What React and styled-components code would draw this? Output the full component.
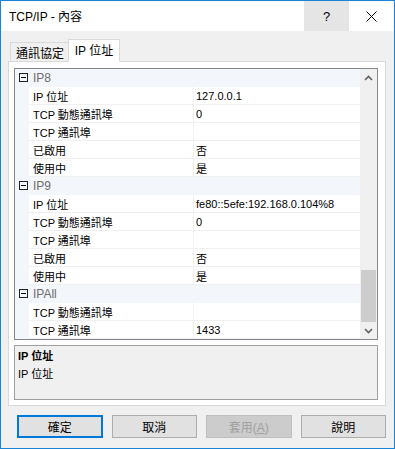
import styled, { createGlobalStyle } from "styled-components";

const GlobalStyle = createGlobalStyle`
  html, body {
    margin: 0;
    padding: 0;
    background: #f0f0f0;
  }
  * {
    box-sizing: border-box;
  }
`;

const groups = [
  {
    name: "IP8",
    rows: [
      ["IP 位址", "127.0.0.1"],
      ["TCP 動態通訊埠", "0"],
      ["TCP 通訊埠", ""],
      ["已啟用", "否"],
      ["使用中", "是"],
    ],
  },
  {
    name: "IP9",
    rows: [
      ["IP 位址", "fe80::5efe:192.168.0.104%8"],
      ["TCP 動態通訊埠", "0"],
      ["TCP 通訊埠", ""],
      ["已啟用", "否"],
      ["使用中", "是"],
    ],
  },
  {
    name: "IPAll",
    rows: [
      ["TCP 動態通訊埠", ""],
      ["TCP 通訊埠", "1433"],
    ],
  },
];

function Chevron({ down }) {
  return (
    <svg width="9" height="6" viewBox="0 0 9 6">
      <path
        d={down ? "M1 1 L4.5 4.5 L8 1" : "M1 5 L4.5 1.5 L8 5"}
        fill="none"
        stroke="#606060"
        strokeWidth="1.6"
      />
    </svg>
  );
}

function App() {
  return (
    <>
      <GlobalStyle />
      <Window>
        <TitleBar>
          <Title>TCP/IP - 內容</Title>
          <CaptionButton $shade>?</CaptionButton>
          <CaptionButton>
            <svg width="11" height="11" viewBox="0 0 11 11">
              <path d="M0.5 0.5 L10.5 10.5 M10.5 0.5 L0.5 10.5" stroke="#000" strokeWidth="1" />
            </svg>
          </CaptionButton>
        </TitleBar>
        <Body>
          <Tabs>
            <Tab>通訊協定</Tab>
            <Tab $active>IP 位址</Tab>
          </Tabs>
          <Panel>
            <Grid>
              <Rows>
                {groups.map((g) => (
                  <div key={g.name}>
                    <CategoryRow>
                      <Gutter>
                        <MinusBox />
                      </Gutter>
                      <CategoryName>{g.name}</CategoryName>
                    </CategoryRow>
                    {g.rows.map(([label, value]) => (
                      <PropRow key={label}>
                        <Gutter />
                        <Label>{label}</Label>
                        <Value>{value}</Value>
                      </PropRow>
                    ))}
                  </div>
                ))}
              </Rows>
              <ScrollBar>
                <ArrowBox>
                  <Chevron />
                </ArrowBox>
                <Track>
                  <Thumb />
                </Track>
                <ArrowBox>
                  <Chevron down />
                </ArrowBox>
              </ScrollBar>
            </Grid>
            <Description>
              <DescTitle>IP 位址</DescTitle>
              <DescText>IP 位址</DescText>
            </Description>
          </Panel>
          <ButtonRow>
            <Button $default>確定</Button>
            <Button>取消</Button>
            <Button disabled>
              套用(<u>A</u>)
            </Button>
            <Button>說明</Button>
          </ButtonRow>
        </Body>
      </Window>
    </>
  );
}

export default App;

const font = `"Liberation Sans", "Noto Sans CJK TC", sans-serif`;

const Window = styled.div`
  width: 395px;
  height: 449px;
  border: 1px solid #1883d7;
  background: #f0f0f0;
  display: flex;
  flex-direction: column;
  font-family: ${font};
  color: #000;
`;

const TitleBar = styled.div`
  height: 30px;
  background: #fff;
  display: flex;
  align-items: stretch;
`;

const Title = styled.div`
  flex: 1;
  display: flex;
  align-items: center;
  padding-left: 8px;
  font-size: 12px;
  padding-bottom: 2px;
`;

const CaptionButton = styled.div`
  width: 45px;
  display: flex;
  align-items: center;
  justify-content: center;
  font-size: 13px;
  background: ${(p) => (p.$shade ? "#e5e5e5" : "transparent")};
`;

const Body = styled.div`
  flex: 1;
  display: flex;
  flex-direction: column;
  padding: 8px 8px 0 7px;
`;

const Tabs = styled.div`
  display: flex;
  align-items: flex-end;
  padding-left: 2px;
  height: 23px;
  position: relative;
  z-index: 1;
  margin-bottom: -1px;
`;

const Tab = styled.div`
  font-size: 12px;
  display: flex;
  align-items: center;
  justify-content: center;
  border: 1px solid #d9d9d9;
  height: ${(p) => (p.$active ? "23px" : "20px")};
  width: ${(p) => (p.$active ? "52px" : "60px")};
  margin-left: ${(p) => (p.$active ? "-2px" : "0")};
  background: ${(p) => (p.$active ? "#fff" : "#f0f0f0")};
  border-bottom: ${(p) => (p.$active ? "1px solid #fff" : "1px solid #d9d9d9")};
  padding-bottom: ${(p) => (p.$active ? "2px" : "0")};
  position: relative;
  z-index: ${(p) => (p.$active ? 2 : 1)};
`;

const Panel = styled.div`
  width: 378px;
  height: 345px;
  background: #fff;
  border: 1px solid #d9d9d9;
  padding: 6px 7px 4px 5px;
  display: flex;
  flex-direction: column;
`;

const Grid = styled.div`
  height: 272px;
  border: 1px solid #828790;
  display: flex;
  background: #fff;
`;

const Rows = styled.div`
  flex: 1;
  overflow: hidden;
  font-size: 11px;
`;

const rowBase = `
  height: 18px;
  display: flex;
  align-items: stretch;
`;

const CategoryRow = styled.div`
  ${rowBase}
  background: #f3f6fb;
`;

const PropRow = styled.div`
  ${rowBase}
`;

const Gutter = styled.div`
  width: 14px;
  flex: none;
  background: #f3f6fb;
  display: flex;
  align-items: center;
  justify-content: center;
`;

const MinusBox = styled.div`
  width: 9px;
  height: 9px;
  border: 1px solid #222;
  margin: 0 0 2px 3px;
  position: relative;
  &::after {
    content: "";
    position: absolute;
    left: 1px;
    right: 1px;
    top: 3px;
    height: 1px;
    background: #000;
  }
`;

const CategoryName = styled.div`
  padding-left: 4px;
  display: flex;
  align-items: center;
  color: #6d6d6d;
  font-size: 12px;
`;

const Cell = styled.div`
  display: flex;
  align-items: center;
  border-bottom: 1px solid #f0f0f0;
  white-space: nowrap;
  overflow: hidden;
`;

const Label = styled(Cell)`
  width: 165px;
  flex: none;
  padding-left: 4px;
  border-right: 1px solid #f0f0f0;
`;

const Value = styled(Cell)`
  flex: 1;
  padding-left: 2px;
`;

const ScrollBar = styled.div`
  width: 17px;
  background: #f0f0f0;
  display: flex;
  flex-direction: column;
`;

const ArrowBox = styled.div`
  height: 17px;
  display: flex;
  align-items: center;
  justify-content: center;
`;

const Track = styled.div`
  flex: 1;
  display: flex;
  flex-direction: column;
  justify-content: flex-end;
  padding: 0 1px;
`;

const Thumb = styled.div`
  height: 52px;
  background: #cdcdcd;
`;

const Description = styled.div`
  margin-top: 5px;
  height: 55px;
  border: 1px solid #a0a0a0;
  background: #f0f0f0;
  padding: 0 3px;
  font-size: 11px;
`;

const DescTitle = styled.div`
  font-weight: bold;
  height: 18px;
  display: flex;
  align-items: center;
`;

const DescText = styled.div`
  height: 18px;
  display: flex;
  align-items: center;
`;

const ButtonRow = styled.div`
  display: flex;
  gap: 9px;
  margin-top: 9px;
  padding-left: 9px;
`;

const Button = styled.button`
  width: 86px;
  height: 23px;
  font-family: ${font};
  font-size: 12px;
  background: ${(p) => (p.disabled ? "#cccccc" : "#e1e1e1")};
  color: ${(p) => (p.disabled ? "#a0a0a0" : "#000")};
  border: ${(p) =>
    p.$default ? "2px solid #0078d7" : p.disabled ? "1px solid #bfbfbf" : "1px solid #adadad"};
  padding: 0;
  margin: 0;
`;
